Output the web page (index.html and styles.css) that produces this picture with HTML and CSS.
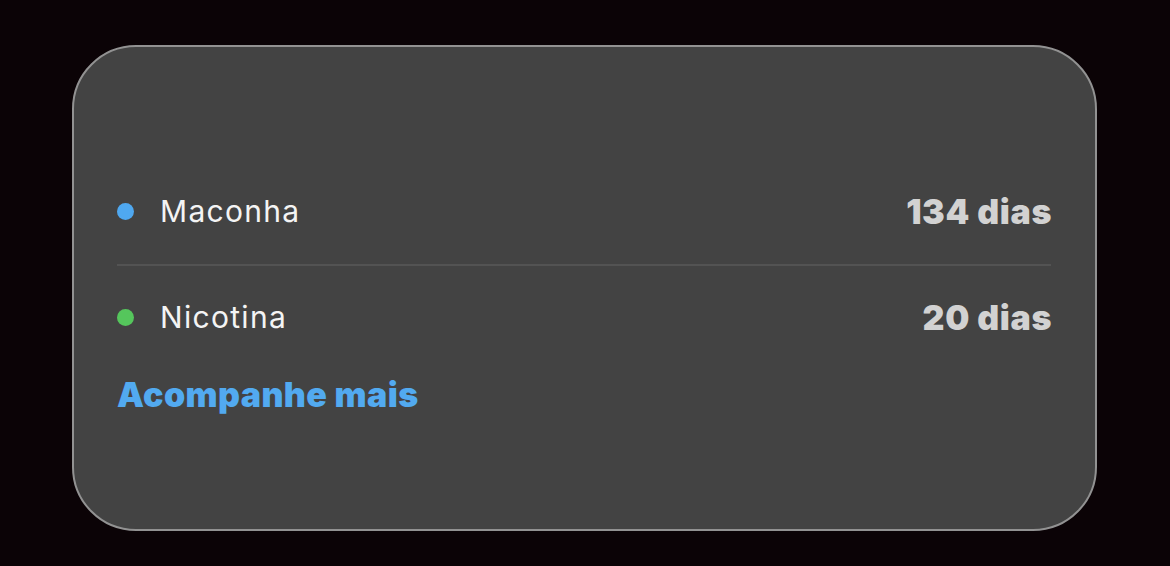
FILE: index.html
```html
<!DOCTYPE html>
<html lang="pt">
<head>
<meta charset="utf-8">
<title>Acompanhamento</title>
<link rel="stylesheet" href="styles.css">
</head>
<body>
  <section class="card">
    <div class="row">
      <span class="dot dot-blue"></span>
      <span class="label">Maconha</span>
      <span class="value">134 dias</span>
    </div>
    <div class="sep"></div>
    <div class="row row-second">
      <span class="dot dot-green"></span>
      <span class="label">Nicotina</span>
      <span class="value">20 dias</span>
    </div>
    <a class="more" href="#">Acompanhe mais</a>
  </section>
</body>
</html>
```
FILE: styles.css
```css
html, body {
  margin: 0;
  padding: 0;
  background: #0b0306;
  height: 100%;
}

body {
  font-family: Inter, "Noto Sans", sans-serif;
}

.card {
  box-sizing: border-box;
  width: 1025px;
  height: 486px;
  margin: 45px 0 0 72px;
  background: #434343;
  border: 2px solid #929292;
  border-radius: 64px;
  padding: 144px 44px 0 43px;
  display: flex;
  flex-direction: column;
}

.row {
  display: flex;
  align-items: center;
  height: 40px;
}

.dot {
  width: 17px;
  height: 17px;
  border-radius: 50%;
  margin-right: 26px;
  flex: none;
}

.dot-blue { background: #4fa8f0; }
.dot-green { background: #55c65c; }

.label {
  color: #f4f4f4;
  font-size: 30px;
  font-weight: 400;
  letter-spacing: 1.3px;
}

.value {
  margin-left: auto;
  color: #d2d2d2;
  font-size: 34px;
  font-weight: 900;
  letter-spacing: 0.6px;
  margin-right: -1px;
}

.sep {
  height: 2px;
  background: #535353;
  margin: 33px 0 31px;
}

.more {
  margin-top: 38px;
  line-height: 40px;
  color: #52aaf0;
  font-size: 34px;
  font-weight: 900;
  letter-spacing: 0.4px;
  text-decoration: none;
}
```
